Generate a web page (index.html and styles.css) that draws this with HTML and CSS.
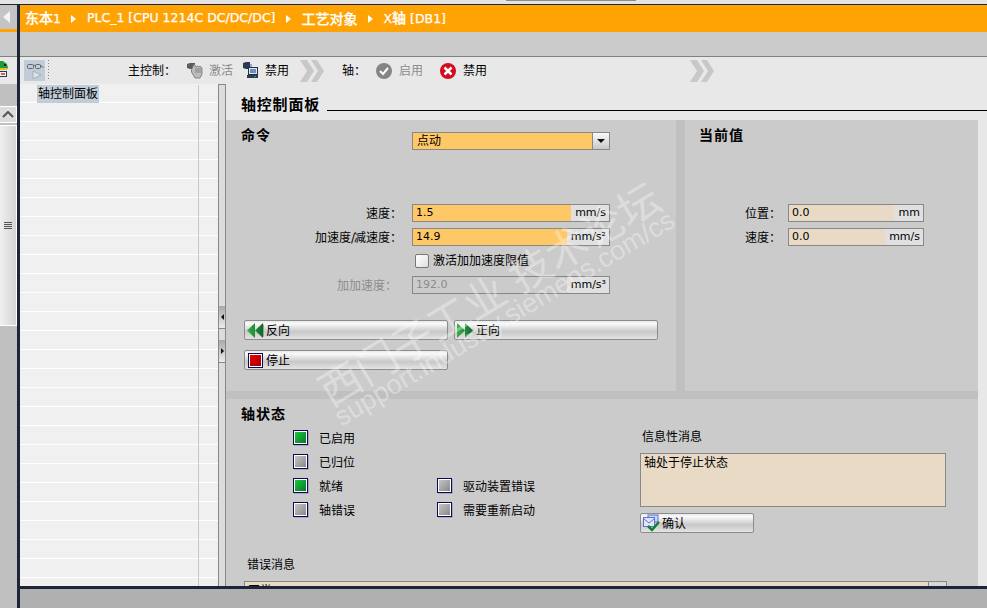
FILE: index.html
```html
<!DOCTYPE html>
<html lang="zh-CN">
<head>
<meta charset="utf-8">
<title>轴控制面板</title>
<link rel="stylesheet" href="styles.css">
</head>
<body>
<svg class="defs" width="0" height="0">
  <defs>
    <linearGradient id="gGreen" x1="0" y1="0" x2="1" y2="1"><stop offset="0" stop-color="#16c83a"/><stop offset="1" stop-color="#0b7a2c"/></linearGradient>
    <linearGradient id="gGrey" x1="0" y1="0" x2="1" y2="1"><stop offset="0" stop-color="#c4c4c4"/><stop offset="1" stop-color="#8a8a8a"/></linearGradient>
    <linearGradient id="gRed" x1="0" y1="0" x2="1" y2="1"><stop offset="0" stop-color="#f00000"/><stop offset="1" stop-color="#a00000"/></linearGradient>
    <linearGradient id="gArrow" x1="0" y1="0" x2="1" y2="0"><stop offset="0" stop-color="#36b04a"/><stop offset="1" stop-color="#0c6a2a"/></linearGradient>
    <symbol id="chev" viewBox="0 0 24 24"><path d="M0 1h7l7 11-7 11H0l7-11z M11 1h6l7 11-7 11h-6l7-11z" fill="#c8c8c8"/></symbol>
    <symbol id="led-on" viewBox="0 0 16 16"><rect x="1" y="1" width="15" height="15" fill="#a8a8c0"/><rect x=".5" y=".5" width="14" height="14" fill="#fff" stroke="#0b0b50"/><rect x="2" y="2" width="11" height="11" fill="url(#gGreen)"/></symbol>
    <symbol id="led-off" viewBox="0 0 16 16"><rect x="1" y="1" width="15" height="15" fill="#a8a8c0"/><rect x=".5" y=".5" width="14" height="14" fill="#fff" stroke="#0b0b50"/><rect x="2" y="2" width="11" height="11" fill="url(#gGrey)"/></symbol>
  </defs>
</svg>
<div class="app">
  <div class="topstrip"><span class="topmark"></span></div>
  <div class="shell">
    <aside class="rail">
      <div class="rail-head"><svg class="rail-arrow" width="7" height="12" viewBox="0 0 7 12"><path d="M7 0v12L0 6z" fill="#f4f4f4"/></svg></div>
      <div class="rail-orange"></div>
      <div class="rail-band"></div>
      <div class="rail-tool">
        <svg class="rail-icon" width="9" height="18" viewBox="0 0 9 18"><path d="M0 1h3l4 3 1 4-2 2H0z" fill="#1f9a3c"/><path d="M4 4h2v2H4z" fill="#06300f"/><path d="M0 8h7v2H0z" fill="#e8c020"/><path d="M0 11h7v6H0z" fill="#f2f2f8"/><path d="M0 11.500h7M6.500 11v6M0 16.500h7" stroke="#30306a" fill="none"/><path d="M1 13h4v2H1z" fill="#d86a20"/></svg>
      </div>
      <div class="rail-gap"></div>
      <div class="scroll-up"><svg width="12" height="7" viewBox="0 0 12 7"><path d="M1 6l5-5 5 5" fill="none" stroke="#555" stroke-width="2"/></svg></div>
      <div class="scroll-track"><span class="grip"></span></div>
    </aside>
    <div class="divider"></div>
    <div class="stage">
      <header class="crumbs">
        <span><span class="zh">东本</span>1</span><i class="tri"></i>
        <span>PLC_1 [CPU 1214C DC/DC/DC]</span><i class="tri"></i>
        <span class="zh">工艺对象</span><i class="tri"></i>
        <span>X<span class="zh">轴</span> [DB1]</span>
      </header>
      <div class="band"></div>
      <div class="toolbar">
        <button class="tool-btn" type="button">
          <svg width="21" height="21" viewBox="0 0 21 21"><rect x="3.500" y="4.500" width="6" height="4" rx="1" fill="none" stroke="#666"/><rect x="11.500" y="4.500" width="5" height="4" rx="1" fill="none" stroke="#666"/><path d="M9.500 5.500h2M16.500 5.500l3 2" stroke="#666" fill="none"/><path d="M9 11v8l8-4z" fill="#dde3e9" stroke="#a4afba"/></svg>
        </button>
        <span class="tool-sep"></span>
        <span class="tool-label main-label">主控制<b class="colon">：</b></span>
        <svg class="ico hand" width="16" height="17" viewBox="0 0 16 17"><path d="M0 2l3-1h5v6H3L0 6z" fill="#5c5c5c"/><path d="M7 2l2 3 1.500-1 1.500 1 1-1 2 2v6l-2 4H8L4.500 10V7.500z" fill="#bcbcbc" stroke="#6e6e6e" stroke-width=".8"/><path d="M9 6v5M11 6v5M13 6v5" stroke="#7a7a7a" stroke-width=".8"/></svg>
        <span class="tool-label off t-act">激活</span>
        <svg class="ico pc" width="16" height="17" viewBox="0 0 16 17"><path d="M0 1l3-1h4v7H3L0 6z" fill="#2c3a55"/><path d="M7 2h2v3H7z" fill="#a0aab8"/><rect x="5.500" y="5.500" width="9" height="7" fill="#dfe6ee" stroke="#23304a"/><path d="M7 7h6v4H7z" fill="#6a90c0"/><path d="M4 13h11v3H4z" fill="#2f3b52"/><path d="M11 14h2v1h-2z" fill="#22b04a"/></svg>
        <span class="tool-label t-dis">禁用</span>
        <svg class="chev c1" width="24" height="24"><use href="#chev"/></svg>
        <span class="tool-label t-axis">轴<b class="colon">：</b></span>
        <svg class="ico en" width="16" height="16" viewBox="0 0 16 16"><circle cx="8" cy="8" r="8" fill="#858585"/><path d="M4 8l3 3 5-6" fill="none" stroke="#fff" stroke-width="2"/></svg>
        <span class="tool-label off t-en">启用</span>
        <svg class="ico ds" width="16" height="16" viewBox="0 0 16 16"><circle cx="8" cy="8" r="8" fill="#d40c1e"/><path d="M4.500 4.500l7 7M11.500 4.500l-7 7" stroke="#fff" stroke-width="2.500"/></svg>
        <span class="tool-label t-dis2">禁用</span>
        <svg class="chev c2" width="24" height="24"><use href="#chev"/></svg>
      </div>
      <div class="work">
        <nav class="tree">
          <div class="tree-col"><span class="tree-item">轴控制面板</span></div>
          <div class="tree-col2"></div>
        </nav>
        <div class="splitter">
          <span class="split-btn"><i class="split-tri left"></i></span>
          <span class="split-btn"><i class="split-tri right"></i></span>
        </div>
        <main class="content">
          <div class="title-row"><h1>轴控制面板</h1><span class="rule"></span></div>
          <div class="panels">
            <section class="panel cmd">
              <h2>命令</h2>
              <div class="select"><span>点动</span><span class="select-btn"><i></i></span></div>
              <div class="form">
                <label class="lbl">速度<b class="colon">：</b></label>
                <div class="field"><span class="val active w159">1.5</span><span class="unit">mm/s</span></div>
                <label class="lbl">加速度<span class="slash">/</span>减速度<b class="colon">：</b></label>
                <div class="field"><span class="val active w155">14.9</span><span class="unit">mm/s²</span></div>
                <span></span>
                <div class="check"><span class="box"></span>激活加加速度限值</div>
                <label class="lbl dim jerk">加加速度<b class="colon">：</b></label>
                <div class="field"><span class="val dim w155">192.0</span><span class="unit">mm/s³</span></div>
              </div>
              <div class="btns">
                <button class="btn" type="button"><svg width="17" height="15" viewBox="0 0 17 15"><path d="M8 0v15L0 7.500zM16 0v15L8 7.500z" fill="url(#gArrow)"/><path d="M17 1v13l-1-1V2z" fill="#9aa0a0"/></svg><span class="btn-text">反向</span></button>
                <button class="btn" type="button"><svg width="17" height="15" viewBox="0 0 17 15"><path d="M0 0v15l8-7.500zM8 0v15l8-7.500z" fill="url(#gArrow)"/></svg><span class="btn-text">正向</span></button>
                <button class="btn" type="button"><svg width="17" height="15" viewBox="0 0 15 15"><rect x=".5" y=".5" width="14" height="14" fill="#fff" stroke="#0b0b50"/><rect x="2" y="2" width="11" height="11" fill="url(#gRed)"/></svg><span class="btn-text">停止</span></button>
              </div>
            </section>
            <section class="panel now">
              <h2>当前值</h2>
              <div class="form now-form">
                <label class="lbl">位置<b class="colon">：</b></label>
                <div class="field"><span class="val read w106">0.0</span><span class="unit">mm</span></div>
                <label class="lbl">速度<b class="colon">：</b></label>
                <div class="field"><span class="val read w97">0.0</span><span class="unit">mm/s</span></div>
              </div>
            </section>
            <section class="panel status">
              <h2>轴状态</h2>
              <div class="status-top">
                <div class="leds">
                  <div class="led"><svg width="16" height="16"><use href="#led-on"/></svg><span>已启用</span></div>
                  <span></span>
                  <div class="led"><svg width="16" height="16"><use href="#led-off"/></svg><span>已归位</span></div>
                  <span></span>
                  <div class="led"><svg width="16" height="16"><use href="#led-on"/></svg><span>就绪</span></div>
                  <div class="led"><svg width="16" height="16"><use href="#led-off"/></svg><span>驱动装置错误</span></div>
                  <div class="led"><svg width="16" height="16"><use href="#led-off"/></svg><span>轴错误</span></div>
                  <div class="led"><svg width="16" height="16"><use href="#led-off"/></svg><span>需要重新启动</span></div>
                </div>
                <div class="info">
                  <div class="info-label">信息性消息</div>
                  <div class="msg">轴处于停止状态</div>
                  <button class="btn ack" type="button"><svg width="19" height="18" viewBox="0 0 19 18"><rect x="6" y="1" width="10" height="7" fill="#c8d4f8" stroke="#5a74d0"/><rect x="1.500" y="3.500" width="11" height="9" fill="#dfe6fc" stroke="#5a74d0"/><path d="M2 5l5 4 5-4" fill="none" stroke="#5a74d0"/><path d="M6 12l4 4 7-8" fill="none" stroke="#13802c" stroke-width="2.500"/></svg><span class="btn-text">确认</span></button>
                </div>
              </div>
              <div class="err-label">错误消息</div>
              <div class="err"><span class="err-text">正常</span><span class="err-btn"></span></div>
            </section>
          </div>
        </main>
        <div class="edge"></div>
      </div>
      <div class="footer"></div>
    </div>
  </div>
  <div class="mark mark-cn">西门子工业 技术论坛</div>
  <div class="mark mark-en">support.industry.siemens.com/cs</div>
</div>
</body>
</html>
```

FILE: styles.css
```css
* { box-sizing: border-box; }
html, body { margin: 0; padding: 0; }
body { width: 987px; height: 608px; overflow: hidden; background: #e8e8e8; color: #000;
  font: 12px/1 "DejaVu Sans", "Noto Sans CJK SC", sans-serif; }
.defs { position: absolute; }
.app { position: relative; width: 987px; height: 608px; overflow: hidden; display: flex; flex-direction: column; }

.topstrip { height: 5px; flex: none; background: #e4e4e4; border-bottom: 1px solid #1e2538; padding-left: 506px; }
.topmark { display: block; width: 130px; height: 1px; background: #8c8c8c; }

.shell { flex: 1; min-height: 0; display: grid; grid-template-columns: 17px 3px 1fr; grid-template-rows: minmax(0, 1fr); }
.rail { display: flex; flex-direction: column; background: #c0c0c0; min-height: 0; }
.rail-head { height: 24px; flex: none; background: #c4c4c4; display: flex; align-items: center; padding-left: 3px; }
.rail-orange { height: 3px; flex: none; background: #ffa305; }
.rail-band { height: 25px; flex: none; background: #cbcbcb; border-bottom: 1px solid #808080; }
.rail-tool { height: 27px; flex: none; background: #e8e8e8; padding-top: 3px; }
.rail-icon { display: block; }
.rail-gap { height: 22px; flex: none; background: #c0c0c0; }
.scroll-up { width: 17px; height: 17px; flex: none; background: #dcdcdc; border: 1px solid #fff; border-left: 0; display: flex; align-items: center; justify-content: center; }
.scroll-track { margin-top: 2px; flex: none; width: 17px; height: 201px; border: 1px solid #fff; border-left: 0;
  background: linear-gradient(90deg, #f0f0f0, #d4d4d4); display: flex; align-items: center; justify-content: center; }
.grip { width: 8px; height: 7px; background: repeating-linear-gradient(180deg, #555 0 1px, transparent 1px 2px); }
.divider { background: #1e2538; }

.stage { display: flex; flex-direction: column; min-width: 0; min-height: 0; overflow: hidden; }
.crumbs { height: 27px; flex: none; background: #ffa305; color: #fff; display: flex; align-items: center; padding-left: 5px;
  font-size: 12.5px; font-weight: 400; -webkit-text-stroke: .25px #fff; }
.crumbs span { white-space: nowrap; }
.crumbs .zh { font-size: 14px; font-weight: 500; }
.tri { width: 0; height: 0; margin: 0 11px 0 10px; border-left: 5px solid #fff; border-top: 4px solid transparent; border-bottom: 4px solid transparent; }
.band { height: 25px; flex: none; background: #cbcbcb; border-bottom: 1px solid #808080; }

.toolbar { height: 27px; flex: none; background: #e8e8e8; display: flex; align-items: center; padding-left: 4px; }
.tool-btn { width: 21px; height: 21px; padding: 0; border: 0; background: #c0ccd8; }
.tool-btn svg { display: block; }
.tool-sep { width: 1px; height: 21px; margin-left: 3px; background: repeating-linear-gradient(180deg, #888 0 1px, transparent 1px 3px); }
.tool-label { white-space: nowrap; }
.tool-label.off { color: #8c8c8c; }
.colon { font-family: "Noto Sans CJK TC", sans-serif; font-weight: 400; }
.main-label { margin-left: 79px; width: 48px; }
.ico { flex: none; }
.hand { margin-left: 11px; }
.t-act { margin-left: 6px; }
.pc { margin-left: 10px; }
.t-dis { margin-left: 6px; }
.chev { flex: none; }
.c1 { margin-left: 11px; }
.t-axis { margin-left: 18px; width: 24px; }
.en { margin-left: 10px; }
.t-en { margin-left: 7px; }
.ds { margin-left: 17px; }
.t-dis2 { margin-left: 7px; }
.c2 { margin-left: 203px; }

.work { flex: 1; min-height: 0; display: grid; grid-template-columns: 198px 8px 752px 9px; grid-template-rows: minmax(0, 1fr); }
.tree { display: grid; grid-template-columns: 179px 18px; background-color: #f0f0f0;
  background-image: repeating-linear-gradient(180deg, #f0f0f0 0 18px, #fff 18px 19px); padding-right: 1px; }
.tree-col { border-right: 1px solid #c8c8c8; padding-left: 17px; margin-top: 1px; }
.tree-item { display: inline-block; height: 18px; line-height: 18px; padding: 0 1px; background: #c0ccd8; }
.splitter { background: #dcdcdc; border: 1px solid #888; border-width: 1px 1px 0; padding-top: 221px; display: flex; flex-direction: column; gap: 11px; }
.split-btn { height: 23px; flex: none; background: linear-gradient(180deg, #a8a8a8, #ececec); border-bottom: 1px solid #888; display: flex; align-items: center; justify-content: center; }
.split-tri { width: 0; height: 0; border-top: 3px solid transparent; border-bottom: 3px solid transparent; }
.split-tri.left { border-right: 3px solid #111; }
.split-tri.right { border-left: 3px solid #111; }

.content { background: #e8e8e8; min-width: 0; min-height: 0; position: relative; display: flex; flex-direction: column; }
.edge { background: #e8e8e8; }
.title-row { height: 36px; flex: none; display: flex; padding-left: 15px; position: relative; }
h1 { margin: 13px 0 0; font-size: 15px; line-height: 16px; font-weight: 700; white-space: nowrap; letter-spacing: .8px; }
.rule { position: absolute; left: 101px; width: 660px; top: 26px; height: 1px; background: #000; }

.panels { flex: 1; min-height: 0; display: grid; grid-template-columns: 450px 293px; grid-template-rows: 271px minmax(0, 1fr); gap: 8px 9px; background: #c0c0c0; margin-right: 9px; width: 752px; }
.panel { background: #cbcbcb; position: relative; min-width: 0; overflow: hidden; }
.status { grid-column: 1 / 3; }
h2 { margin: 0; font-size: 14px; line-height: 16px; font-weight: 700; position: absolute; left: 15px; top: 7px; letter-spacing: 1px; }
.now h2 { left: 14px; }

.select { margin: 12px 0 0 186px; width: 198px; height: 18px; border: 1px solid #888; background: #ffc866; display: flex; justify-content: space-between; align-items: stretch; padding-left: 4px; line-height: 17px; }
.select-btn { width: 17px; background: linear-gradient(180deg, #fafafa, #c8c8c8); border-left: 1px solid #888; display: flex; align-items: center; justify-content: center; }
.select-btn i { width: 0; height: 0; border-left: 4px solid transparent; border-right: 4px solid transparent; border-top: 4px solid #111; }

.form { margin-top: 54px; display: grid; grid-template-columns: 186px 198px; grid-auto-rows: 18px; row-gap: 6px; }
.lbl { text-align: right; line-height: 18px; white-space: nowrap; padding-right: 10px; }
.lbl.jerk { padding-right: 15px; }
.slash { letter-spacing: -1px; }
.dim { color: #8c8c8c; }
.field { display: flex; height: 18px; border: 1px solid #888; }
.val { display: block; padding-left: 3px; line-height: 16px; font-size: 11px; flex: none; }
.active { background: #ffc866; }
.read { background: #e8dac4; }
.w159 { width: 158px; }
.w155 { width: 154px; }
.w106 { width: 105px; }
.w97 { width: 96px; }
.unit { flex: 1; background: #e0e0e0; text-align: right; padding-right: 3px; line-height: 16px; font-size: 11px; white-space: nowrap; }
.check { display: flex; align-items: center; padding-left: 3px; gap: 4px; white-space: nowrap; }
.box { width: 14px; height: 14px; border: 1px solid #777; border-radius: 2px; background: linear-gradient(135deg, #fff, #e0e0e0); }

.btns { margin-top: 26px; padding-left: 18px; display: grid; grid-template-columns: 204px 204px; grid-auto-rows: 20px; gap: 10px 6px; }
.btn { margin: 0; padding: 0 0 0 2px; height: 20px; border: 1px solid #8c8c8c; border-radius: 2px; display: flex; align-items: center; gap: 2px;
  font: inherit; color: #000; text-align: left;
  background: linear-gradient(180deg, #e8e8e8 0, #fafafa 15%, #d8d8d8 45%, #c8c8c8 60%, #e4e4e4 100%); }
.btn svg { flex: none; }
.btn-text { padding-top: 2px; }

.now-form { grid-template-columns: 103px 136px; margin-top: 84px; }
.now-form .lbl { padding-right: 7px; }

.status-top { display: flex; height: 134px; }
.leds { margin: 31px 0 0 67px; width: 347px; height: 88px; display: grid; grid-template-columns: 144px 1fr; grid-auto-rows: 16px; row-gap: 8px; }
.led { display: flex; align-items: center; gap: 10px; white-space: nowrap; }
.led svg { flex: none; }
.led span { padding-top: 2px; }
.info { padding-top: 32px; }
.info-label { padding-left: 2px; height: 22px; line-height: 12px; }
.msg { width: 306px; height: 54px; border: 1px solid #888; background: #e8dac4; padding: 2px 3px; line-height: 14px; }
.ack { width: 114px; margin-top: 6px; padding-left: 1px; gap: 1px; }
.err-label { margin: 26px 0 0 21px; height: 22px; line-height: 12px; }
.err { margin-left: 18px; width: 703px; height: 30px; border: 1px solid #888; background: #e8dac4; display: flex; justify-content: space-between; padding-left: 3px; }
.err-text { line-height: 14px; padding-top: 2px; }
.err-btn { width: 18px; background: #d8d8d8; border-left: 1px solid #888; }

.footer { height: 22px; flex: none; background: #b0b0b0; border-top: 3px solid #1e2538; }

.mark { position: absolute; color: rgba(255, 255, 255, .36); white-space: nowrap; pointer-events: none; transform-origin: left bottom; transform: rotate(-31deg); font-family: "Liberation Sans", "Noto Sans CJK SC", sans-serif; }
.mark-cn { left: 334px; top: 372px; font-size: 42px; line-height: 42px; }
.mark-en { left: 344px; top: 403px; font-size: 27px; line-height: 28px; }
```
